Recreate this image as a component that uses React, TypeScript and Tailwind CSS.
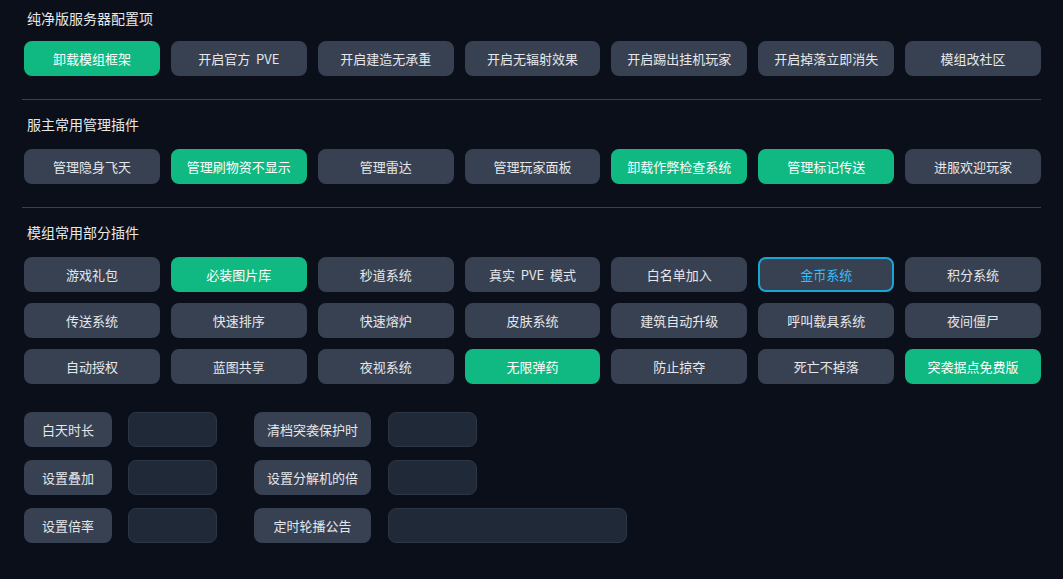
const sections: { title: string; items: [string, 'on' | 'off' | 'focus'][] }[] = [
  {
    title: '纯净版服务器配置项',
    items: [
      ['卸载模组框架', 'on'],
      ['开启官方  PVE', 'off'],
      ['开启建造无承重', 'off'],
      ['开启无辐射效果', 'off'],
      ['开启踢出挂机玩家', 'off'],
      ['开启掉落立即消失', 'off'],
      ['模组改社区', 'off'],
    ],
  },
  {
    title: '服主常用管理插件',
    items: [
      ['管理隐身飞天', 'off'],
      ['管理刷物资不显示', 'on'],
      ['管理雷达', 'off'],
      ['管理玩家面板', 'off'],
      ['卸载作弊检查系统', 'on'],
      ['管理标记传送', 'on'],
      ['进服欢迎玩家', 'off'],
    ],
  },
  {
    title: '模组常用部分插件',
    items: [
      ['游戏礼包', 'off'],
      ['必装图片库', 'on'],
      ['秒道系统', 'off'],
      ['真实  PVE  模式', 'off'],
      ['白名单加入', 'off'],
      ['金币系统', 'focus'],
      ['积分系统', 'off'],
      ['传送系统', 'off'],
      ['快速排序', 'off'],
      ['快速熔炉', 'off'],
      ['皮肤系统', 'off'],
      ['建筑自动升级', 'off'],
      ['呼叫载具系统', 'off'],
      ['夜间僵尸', 'off'],
      ['自动授权', 'off'],
      ['蓝图共享', 'off'],
      ['夜视系统', 'off'],
      ['无限弹药', 'on'],
      ['防止掠夺', 'off'],
      ['死亡不掉落', 'off'],
      ['突袭据点免费版', 'on'],
    ],
  },
]

const settings: [string, string, boolean][] = [
  ['白天时长', '清档突袭保护时', false],
  ['设置叠加', '设置分解机的倍', false],
  ['设置倍率', '定时轮播公告', true],
]

function ToggleButton({ label, state }: { label: string; state: 'on' | 'off' | 'focus' }) {
  const cls =
    state === 'on'
      ? 'bg-[#10b981] text-white border-[#10b981]'
      : state === 'focus'
        ? 'bg-[#374151] text-[#38bdf8] border-[#1aa6d4]'
        : 'bg-[#374151] text-[#e5e7eb] border-[#374151]'
  return (
    <button className={`h-[35px] rounded-[8px] border-2 text-[13px] whitespace-pre ${cls}`}>
      {label}
    </button>
  )
}

export default function App() {
  return (
    <div
      className="min-h-[579px] bg-[#0b0f19] pl-[24px] pr-[22px] pt-[8px] pb-[30px]"
      style={{ fontFamily: '"Microsoft YaHei", "Noto Sans CJK SC", "Noto Sans", sans-serif' }}
    >
      {sections.map((s, si) => (
        <div key={s.title}>
          {si > 0 && <div className="h-px bg-[#374151] -ml-[2px] mt-[23px] mb-[14px]" />}
          <h2
            className={`text-[14px] leading-[20px] text-[#e5e7eb] pl-[3px] ${si > 0 ? 'mb-[15px]' : 'mb-[13px]'}`}
          >
            {s.title}
          </h2>
          <div className="grid grid-cols-7 gap-x-[11px] gap-y-[11px]">
            {s.items.map(([label, state]) => (
              <ToggleButton key={label} label={label} state={state} />
            ))}
          </div>
        </div>
      ))}

      <div className="mt-[28px] flex flex-col gap-[13px]">
        {settings.map(([a, b, wide]) => (
          <div key={a} className="flex items-center">
            <div className="w-[88px] h-[35px] rounded-[8px] bg-[#374151] text-[#e5e7eb] text-[13px] flex items-center justify-center">
              {a}
            </div>
            <input className="ml-[16px] w-[89px] h-[35px] rounded-[8px] bg-[#1f2937] border border-[#2d3644] outline-none" />
            <div className="ml-[37px] w-[117px] h-[35px] rounded-[8px] bg-[#374151] text-[#e5e7eb] text-[13px] flex items-center justify-center">
              {b}
            </div>
            <input
              className={`ml-[17px] h-[35px] rounded-[8px] bg-[#1f2937] border border-[#2d3644] outline-none ${wide ? 'w-[239px]' : 'w-[89px]'}`}
            />
          </div>
        ))}
      </div>
    </div>
  )
}
